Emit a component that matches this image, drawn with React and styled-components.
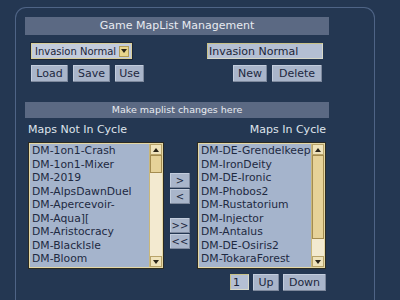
import React from "react";
import styled, { createGlobalStyle } from "styled-components";

const Global = createGlobalStyle`
  html, body { margin: 0; padding: 0; background: #243752; }
  body { font-family: "DejaVu Sans", Verdana, sans-serif; width: 400px; height: 300px; overflow: hidden; }
`;

const Page = styled.div`
  width: 400px;
  height: 300px;
  padding: 7px 0 0 15px;
  box-sizing: border-box;
  background: #243752;
  overflow: hidden;
`;

const Panel = styled.div`
  width: 360px;
  height: 293px;
  box-sizing: border-box;
  border: 1px solid #4f6486;
  border-bottom: none;
  border-radius: 11px 11px 0 0;
  padding: 9px 0 0 9px;
`;

const Content = styled.div`
  width: 304px;
  display: flex;
  flex-direction: column;
`;

const TitleBar = styled.div`
  height: ${(p) => p.h}px;
  line-height: ${(p) => p.h}px;
  background: #5b6983;
  color: #e8ebf1;
  font-size: ${(p) => p.fs}px;
  text-align: center;
  margin-top: ${(p) => p.mt || 0}px;
`;

const TopControls = styled.div`
  display: flex;
  justify-content: space-between;
  padding: 0 6px 0 6px;
  margin-top: 8px;
`;

const Column = styled.div`
  display: flex;
  flex-direction: column;
  align-items: ${(p) => (p.right ? "flex-end" : "flex-start")};
  gap: 6px;
`;

const SelectBox = styled.div`
  width: 101px;
  height: 16px;
  box-sizing: border-box;
  border: 1px solid #d9cf9a;
  box-shadow: 0 0 0 1px #1c2638;
  background: #c3cbdc;
  display: flex;
  align-items: center;
  justify-content: space-between;
  padding: 0 2px 0 3px;
  font-size: 10px;
  color: #1b2538;
`;

const SelectArrow = styled.div`
  width: 10px;
  height: 11px;
  background: #e9d58c;
  border: 1px solid #b19c58;
  box-sizing: border-box;
  display: flex;
  align-items: center;
  justify-content: center;
`;

const NameInput = styled.input`
  width: 116px;
  height: 16px;
  box-sizing: border-box;
  margin: 0;
  border: 1px solid #d7d8c8;
  border-top-color: #c9c287;
  border-left-color: #c9c287;
  background: #b4bfd3;
  font-family: "DejaVu Sans", Verdana, sans-serif;
  font-size: 11px;
  color: #1b2538;
  padding: 0 1px;
  outline: none;
`;

const ButtonRow = styled.div`
  display: flex;
  gap: ${(p) => p.gap || 5}px;
  margin-right: ${(p) => p.mr || 0}px;
`;

const Btn = styled.button`
  width: ${(p) => p.w}px;
  height: ${(p) => p.h || 17}px;
  box-sizing: border-box;
  margin: 0;
  padding: 0;
  border: none;
  background: #a9b5ca;
  box-shadow: inset -1px -1px 0 #7d889c, inset 1px 1px 0 #c3cddd;
  color: #1d2840;
  font-family: "DejaVu Sans", Verdana, sans-serif;
  font-size: ${(p) => p.fs || 11}px;
  line-height: 1;
  text-align: center;
`;

const ListsArea = styled.div`
  padding-left: 3px;
  margin-top: 3px;
  display: flex;
  flex-direction: column;
`;

const Labels = styled.div`
  display: flex;
  justify-content: space-between;
  width: 298px;
  font-size: 11px;
  color: #dfe4ec;
  height: 17px;
  line-height: 17px;
`;

const ListsRow = styled.div`
  display: flex;
  margin-top: 4px;
`;

const ListBox = styled.div`
  width: ${(p) => p.w}px;
  height: 127px;
  box-sizing: border-box;
  border: 1px solid #2b2a22;
  box-shadow: inset 0 0 0 1px #e4d7a4;
  background: #a5b4cc;
  display: flex;
  padding: 1px;
`;

const Items = styled.div`
  flex: 1;
  overflow: hidden;
  padding: 0 0 0 2px;
  font-size: 10.8px;
  line-height: 13.5px;
  color: #1e2a42;
  white-space: nowrap;
`;

const ScrollBar = styled.div`
  width: 12px;
  flex: none;
  display: flex;
  flex-direction: column;
  background: #f3ead0;
  border-left: 1px solid #c8b77c;
`;

const ScrollArrow = styled.div`
  height: 11px;
  background: #efe3bb;
  border: 1px solid #b8a36a;
  box-sizing: border-box;
  display: flex;
  align-items: center;
  justify-content: center;
`;

const Thumb = styled.div`
  height: ${(p) => p.h}px;
  background: #e6d298;
  border: 1px solid #a48c50;
  box-sizing: border-box;
`;

const Track = styled.div`
  flex: 1;
`;

const MoveCol = styled.div`
  width: 20px;
  margin: 31px 7px 0 6px;
  display: flex;
  flex-direction: column;
`;

const MoveGroup = styled.div`
  display: flex;
  flex-direction: column;
  gap: 1px;
  margin-bottom: 14px;
`;

const BottomRow = styled.div`
  display: flex;
  justify-content: flex-end;
  width: 298px;
  margin-top: 5px;
  gap: 4px;
`;

const OrderInput = styled.input`
  width: 19px;
  height: 16px;
  box-sizing: border-box;
  margin: 0;
  border: 1px solid #d7d8c8;
  border-top-color: #c9c287;
  border-left-color: #c9c287;
  background: #b4bfd3;
  font-family: "DejaVu Sans", Verdana, sans-serif;
  font-size: 11px;
  color: #1b2538;
  padding: 0 2px;
  outline: none;
`;

const Tri = ({ up }) => (
  <svg width="6" height="4" viewBox="0 0 6 4">
    {up ? <polygon points="0,4 6,4 3,0" fill="#2a2418" /> : <polygon points="0,0 6,0 3,4" fill="#2a2418" />}
  </svg>
);

const left = [
  "DM-1on1-Crash",
  "DM-1on1-Mixer",
  "DM-2019",
  "DM-AlpsDawnDuel",
  "DM-Apercevoir-",
  "DM-Aqua][",
  "DM-Aristocracy",
  "DM-BlackIsle",
  "DM-Bloom",
];

const right = [
  "DM-DE-Grendelkeep",
  "DM-IronDeity",
  "DM-DE-Ironic",
  "DM-Phobos2",
  "DM-Rustatorium",
  "DM-Injector",
  "DM-Antalus",
  "DM-DE-Osiris2",
  "DM-TokaraForest",
];

export default function App() {
  return (
    <Page>
      <Global />
      <Panel>
        <Content>
          <TitleBar h={18} fs={11}>Game MapList Management</TitleBar>
          <TopControls>
            <Column>
              <SelectBox>
                <span>Invasion Normal</span>
                <SelectArrow>
                  <Tri />
                </SelectArrow>
              </SelectBox>
              <ButtonRow gap={5}>
                <Btn w={37}>Load</Btn>
                <Btn w={37}>Save</Btn>
                <Btn w={29}>Use</Btn>
              </ButtonRow>
            </Column>
            <Column right>
              <NameInput defaultValue="Invasion Normal" />
              <ButtonRow gap={5} mr={1}>
                <Btn w={34}>New</Btn>
                <Btn w={50}>Delete</Btn>
              </ButtonRow>
            </Column>
          </TopControls>
          <TitleBar h={16} fs={9.5} mt={20}>Make maplist changes here</TitleBar>
          <ListsArea>
            <Labels>
              <span>Maps Not In Cycle</span>
              <span>Maps In Cycle</span>
            </Labels>
            <ListsRow>
              <ListBox w={136}>
                <Items>
                  {left.map((m) => (
                    <div key={m}>{m}</div>
                  ))}
                </Items>
                <ScrollBar>
                  <ScrollArrow>
                    <Tri up />
                  </ScrollArrow>
                  <Thumb h={18} />
                  <Track />
                  <ScrollArrow>
                    <Tri />
                  </ScrollArrow>
                </ScrollBar>
              </ListBox>
              <MoveCol>
                <MoveGroup>
                  <Btn w={20} h={15} fs={10}>&gt;</Btn>
                  <Btn w={20} h={15} fs={10}>&lt;</Btn>
                </MoveGroup>
                <MoveGroup>
                  <Btn w={20} h={15} fs={10}>&gt;&gt;</Btn>
                  <Btn w={20} h={15} fs={10}>&lt;&lt;</Btn>
                </MoveGroup>
              </MoveCol>
              <ListBox w={129}>
                <Items>
                  {right.map((m) => (
                    <div key={m}>{m}</div>
                  ))}
                </Items>
                <ScrollBar>
                  <ScrollArrow>
                    <Tri up />
                  </ScrollArrow>
                  <Thumb h={84} />
                  <Track />
                  <ScrollArrow>
                    <Tri />
                  </ScrollArrow>
                </ScrollBar>
              </ListBox>
            </ListsRow>
            <BottomRow>
              <OrderInput defaultValue="1" />
              <Btn w={26}>Up</Btn>
              <Btn w={43}>Down</Btn>
            </BottomRow>
          </ListsArea>
        </Content>
      </Panel>
    </Page>
  );
}
